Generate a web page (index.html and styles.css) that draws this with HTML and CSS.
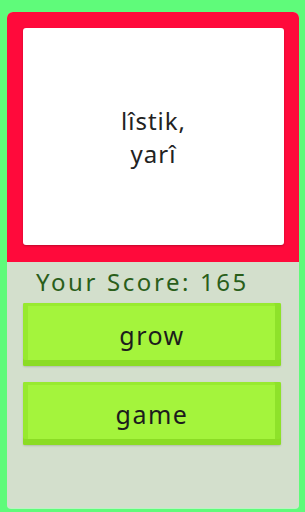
FILE: index.html
```html
<!DOCTYPE html>
<html lang="en">
<head>
    <meta charset="UTF-8">
    <meta name="viewport" content="width=device-width, initial-scale=1.0">
    <title>Word Card</title>
    <link rel="stylesheet" href="styles.css">
</head>
<body>
    <div class="panel">
        <div class="card-frame">
            <div class="card">
                <p class="word">lîstik,<br>yarî</p>
            </div>
        </div>
        <div class="controls">
            <div class="score">Your Score: 165</div>
            <button class="big-btn">grow</button>
            <button class="big-btn">game</button>
        </div>
    </div>
</body>
</html>
```

FILE: styles.css
```css
body {
    margin: 0;
    background-color: #5ffb7a;
    font-family: 'Noto Sans', sans-serif;
    height: 512px;
    box-sizing: border-box;
    padding: 12px 6px 4px 7px;
    display: flex;
}
.panel {
    flex: 1;
    display: flex;
    flex-direction: column;
    background-color: #d3dfcc;
    border-radius: 6px 6px 4px 4px;
    box-shadow: 0 1px 0 #b8f5c0;
    overflow: hidden;
}
.card-frame {
    height: 250px;
    box-sizing: border-box;
    background-color: #ff0a3b;
    padding: 16px 15px 17px 16px;
    display: flex;
}
.card {
    flex: 1;
    background-color: #fff;
    border-radius: 3px;
    box-shadow: 0 1px 2px rgba(0, 0, 0, 0.25);
    display: flex;
    align-items: center;
    justify-content: center;
}
.word {
    margin: 0;
    text-align: center;
    font-size: 24px;
    line-height: 33px;
    letter-spacing: 1px;
    color: #222;
}
.controls {
    flex: 1;
    display: flex;
    flex-direction: column;
    padding: 6px 18px 0 16px;
    gap: 16px;
}
.score {
    color: #2a5e1a;
    font-size: 24px;
    line-height: 28px;
    padding-left: 13px;
    margin-bottom: -9px;
    letter-spacing: 2.6px;
}
.big-btn {
    height: 63px;
    border: none;
    border-radius: 2px;
    background-color: #a4f43c;
    box-shadow: inset 0 -6px 0 #8bdc25, inset 5px 0 0 #97e92f, inset -6px 0 0 #8ee22a, inset 0 3px 0 #98ea30, 0 1px 2px rgba(0, 0, 0, 0.15);
    font-family: 'Noto Sans', sans-serif;
    font-size: 25px;
    letter-spacing: 1.5px;
    color: #1c1c1c;
    cursor: pointer;
}
```
